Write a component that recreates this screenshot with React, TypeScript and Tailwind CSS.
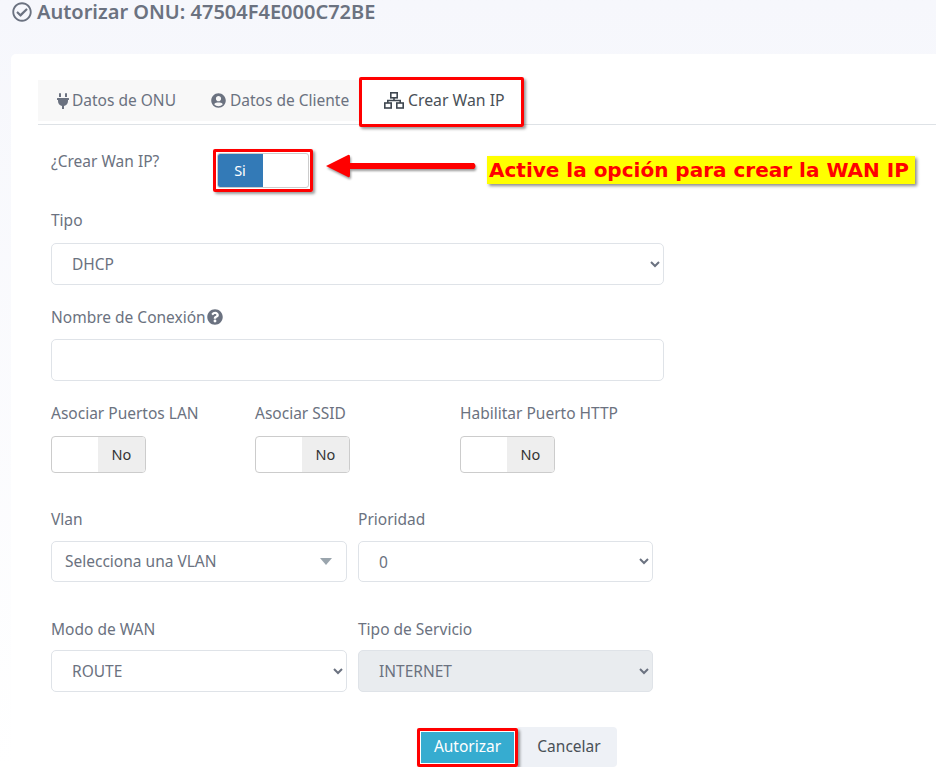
import { FaPlug, FaQuestionCircle, FaRegCheckCircle, FaUserCircle } from 'react-icons/fa';
import type { ReactNode } from 'react';

const labelClasses = 'block text-[15.5px] leading-[20px] text-[#6b7280]';
const fieldClasses = 'w-full h-[42px] rounded-[5px] border border-[#dfe3e8] bg-white pl-4 pr-2 text-[15.5px] text-[#6b7280]';

const Annotated = ({ children, className = '' }: { children: ReactNode; className?: string }) => (
  <div className={`relative ${className}`}>
    {children}
    <div className="pointer-events-none absolute -inset-[4px] border-[3px] border-[#ff0000] rounded-[2px] shadow-[2px_2px_3px_rgba(0,0,0,0.4)]" />
  </div>
);

const NetworkIcon = () => (
  <svg width="20" height="17" viewBox="0 0 20 17" fill="none" stroke="#3f4750" strokeWidth="1.6">
    <rect x="6.8" y="0.8" width="6.4" height="5" />
    <path d="M10 6V8.5M3.8 11V8.5H16.2V11" />
    <rect x="0.8" y="11" width="6.4" height="5" />
    <rect x="12.8" y="11" width="6.4" height="5" />
  </svg>
);

const NoToggle = () => (
  <div className="flex w-[95px] h-[37px] overflow-hidden rounded-[4px] border border-[#ccc] bg-white">
    <div className="w-[46px]" />
    <div className="flex-1 flex items-center justify-center bg-[#eeeeee] text-[14.5px] text-[#333]">No</div>
  </div>
);

const Field = ({ label, gap = 'mt-[13px]', children }: { label: string; gap?: string; children: ReactNode }) => (
  <div>
    <label className={labelClasses}>{label}</label>
    <div className={gap}>{children}</div>
  </div>
);

export default function App() {
  return (
    <div className="h-[767px] overflow-hidden bg-gradient-to-b from-[#f6f7fc] to-[#ffffff] font-['Noto_Sans',sans-serif]">
      <h1 className="flex items-center gap-[5px] h-[54px] pl-[12px] pb-[30px] text-[20px] leading-[22px] font-semibold text-[#6b7280]">
        <FaRegCheckCircle className="text-[20px]" />
        Autorizar ONU: 47504F4E000C72BE
      </h1>

      <div className="ml-[11px] h-[713px] rounded-tl-[5px] bg-white pl-[27px] pt-[26px]">
        <div className="flex h-[45px] border-b border-[#dee2e6]">
          <div className="flex w-[322px] items-start pb-[4px]">
            <div className="flex h-[41px] items-center gap-[1px] bg-[#f8f8f8] pl-[17px] pr-[18px] text-[15.5px] text-[#6b7280]">
              <FaPlug className="text-[16px]" />
              Datos de ONU
            </div>
            <div className="flex h-[41px] flex-1 items-center gap-[4px] bg-[#f8f8f8] pl-[17px] text-[15.5px] text-[#6b7280]">
              <FaUserCircle className="text-[15px]" />
              Datos de Cliente
            </div>
          </div>
          <Annotated className="ml-[3px] mt-[1px] h-[42px] w-[157px]">
            <div className="flex h-full items-center gap-[4px] bg-white pl-[21px] pb-[3px] text-[15.8px] text-[#495057]">
              <NetworkIcon />
              Crear Wan IP
            </div>
          </Annotated>
        </div>

        <div className="relative w-[613px] ml-[13px]">
          <div className="flex pt-[28px]">
            <label className={`${labelClasses} -mt-[2px] w-[166px]`}>¿Crear Wan IP?</label>
            <Annotated className="w-[92px] h-[35px]">
              <div className="flex h-full overflow-hidden rounded-[3px] border border-[#ccc] bg-white">
                <div className="-ml-px flex w-[46px] items-center justify-center bg-[#337ab7] text-[14.5px] text-white">Si</div>
              </div>
            </Annotated>
          </div>

          <svg className="absolute left-[274px] top-[25px] drop-shadow-[1px_2px_1px_rgba(0,0,0,0.4)]" width="154" height="32" viewBox="0 0 154 32">
            <path d="M1 16 L23 5 Q25 4 25 7 L25 13 L149 13 Q152 16 149 19 L25 19 L25 25 Q25 28 23 27 Z" fill="#ff0000" />
          </svg>
          <div className="absolute left-[436px] top-[31px] whitespace-nowrap bg-[#ffff00] pl-[2px] pr-[6px] h-[28px] leading-[28px] text-[20px] font-bold text-[#ff0000] font-['DejaVu_Sans',sans-serif] shadow-[2px_2px_3px_rgba(0,0,0,0.45)]">
            Active la opción para crear la WAN IP
          </div>

          <div className="mt-[22px]">
            <Field label="Tipo">
              <select className={fieldClasses} defaultValue="DHCP">
                <option>DHCP</option>
              </select>
            </Field>
          </div>

          <div className="mt-[22px]">
            <label className={`${labelClasses} flex items-center gap-[1px]`}>
              Nombre de Conexión
              <FaQuestionCircle className="text-[16px]" />
            </label>
            <input className="mt-[12px] h-[42px] w-full rounded-[5px] border border-[#dfe3e8] bg-white" />
          </div>

          <div className="mt-[22px] grid grid-cols-[204px_205px_1fr]">
            <Field label="Asociar Puertos LAN"><NoToggle /></Field>
            <Field label="Asociar SSID"><NoToggle /></Field>
            <Field label="Habilitar Puerto HTTP"><NoToggle /></Field>
          </div>

          <div className="mt-[36px] grid w-[602px] grid-cols-[296px_295px] gap-x-[11px]">
            <Field label="Vlan" gap="mt-[12px]">
              <div className="flex h-[41px] items-center justify-between rounded-[5px] border border-[#dfe3e8] pl-[13px] pr-[14px] text-[15.5px] text-[#6b7280]">
                Selecciona una VLAN
                <span className="h-0 w-0 border-x-[6px] border-t-[7px] border-x-transparent border-t-[#9aa5ad]" />
              </div>
            </Field>
            <Field label="Prioridad" gap="mt-[12px]">
              <select className={`${fieldClasses} !h-[41px]`} defaultValue="0">
                <option>0</option>
              </select>
            </Field>
          </div>

          <div className="mt-[37px] grid w-[602px] grid-cols-[296px_295px] gap-x-[11px]">
            <Field label="Modo de WAN" gap="mt-[11px]">
              <select className={fieldClasses} defaultValue="ROUTE">
                <option>ROUTE</option>
              </select>
            </Field>
            <Field label="Tipo de Servicio" gap="mt-[11px]">
              <select disabled className={`${fieldClasses} !bg-[#e9ecef] !opacity-100`} defaultValue="INTERNET">
                <option>INTERNET</option>
              </select>
            </Field>
          </div>

          <div className="mt-[35px] ml-[370px] flex items-center">
            <Annotated className="w-[93px] h-[31px]">
              <button className="h-full w-full bg-[#36acd0] text-[15.5px] text-white">Autorizar</button>
            </Annotated>
            <button className="ml-[4px] h-[40px] w-[99px] rounded-r-[4px] bg-[#eef1f6] pl-[3px] text-[15.5px] text-[#495057]">Cancelar</button>
          </div>
        </div>
      </div>
    </div>
  );
}
